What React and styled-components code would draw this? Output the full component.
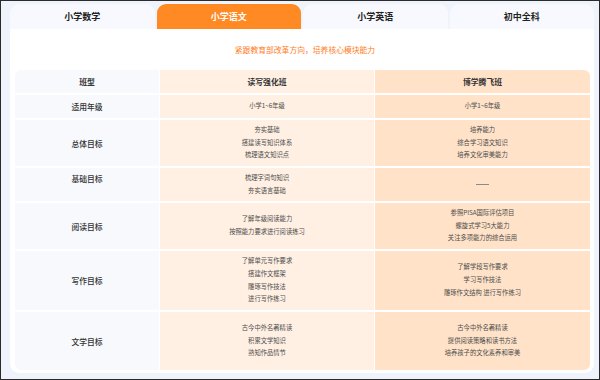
import React from 'react';
import styled, { createGlobalStyle } from 'styled-components';

const GlobalStyle = createGlobalStyle`
  html, body {
    margin: 0;
    padding: 0;
  }
  body {
    font-family: "Noto Sans CJK SC", "Noto Sans", sans-serif;
    background: #eef3fc;
  }
`;

// styles
const Page = styled.div`
  width: 600px;
  height: 380px;
  box-sizing: border-box;
  border: 1px solid #2b2b2b;
  background: #eef3fc;
  padding: 3px 5px 0 9px;
`;

const Tabs = styled.div`
  display: grid;
  grid-template-columns: repeat(4, 1fr);
  column-gap: 2px;
  height: 25px;
`;

const Tab = styled.div`
  display: flex;
  align-items: center;
  justify-content: center;
  border-radius: 9px 9px 0 0;
  font-size: 9px;
  font-weight: 700;
  color: ${p => (p.$active ? '#fff' : '#222')};
  background: ${p => (p.$active ? '#ff8a24' : '#f7f9fe')};
`;

const Card = styled.div`
  background: #fff;
  border-radius: 0 0 9px 9px;
  height: 344px;
  padding: 0 3px 0 5px;
  box-sizing: border-box;
`;

const Slogan = styled.div`
  height: 41px;
  display: flex;
  align-items: center;
  justify-content: center;
  color: #ff7c1c;
  font-size: 7.8px;
  padding-left: 4px;
`;

const Table = styled.div`
  display: grid;
  grid-template-columns: 144px 214px 215px;
  grid-template-rows: 23px 23px 46px 33px 46px 59px 58px;
  column-gap: 1px;
  row-gap: 2px;
`;

const colBg = ['#f7f9fd', '#fff0e3', '#ffe2c8'];

const Cell = styled.div`
  background: ${p => colBg[p.$col]};
  display: flex;
  flex-direction: column;
  align-items: center;
  justify-content: center;
  text-align: center;
  border-top-left-radius: ${p => (p.$tl ? '6px' : '0')};
  border-top-right-radius: ${p => (p.$tr ? '6px' : '0')};
  border-bottom-left-radius: ${p => (p.$bl ? '6px' : '0')};
  border-bottom-right-radius: ${p => (p.$br ? '6px' : '0')};
`;

const HeadText = styled.span`
  font-size: 7.8px;
  font-weight: 600;
  color: #333;
`;

const Label = styled.span`
  font-size: 7.8px;
  font-weight: 500;
  color: #333;
  padding-bottom: ${p => p.$lift || 0}px;
`;

const Line = styled.span`
  display: block;
  font-size: 6.3px;
  line-height: 12.7px;
  color: #4d4d4d;
`;

const Dash = styled.span`
  display: block;
  width: 13px;
  height: 0;
  border-top: 1px solid #8a8a8a;
`;

const tabs = ['小学数学', '小学语文', '小学英语', '初中全科'];

const rows = [
  { label: '适用年级', a: ['小学1~6年级'], b: ['小学1~6年级'] },
  {
    label: '总体目标',
    a: ['夯实基础', '搭建读写知识体系', '梳理语文知识点'],
    b: ['培养能力', '综合学习语文知识', '培养文化审美能力'],
  },
  { label: '基础目标', lift: 12, a: ['梳理字词句知识', '夯实语言基础'], b: null },
  {
    label: '阅读目标',
    a: ['了解年级阅读能力', '按照能力要求进行阅读练习'],
    b: ['参照PISA国际评估项目', '螺旋式学习5大能力', '关注多项能力的综合运用'],
  },
  {
    label: '写作目标',
    a: ['了解单元写作要求', '搭建作文框架', '雕琢写作技法', '进行写作练习'],
    b: ['了解学段写作要求', '学习写作技法', '雕琢作文结构 进行写作练习'],
  },
  {
    label: '文学目标',
    a: ['古今中外名著精读', '积累文学知识', '熟知作品情节'],
    b: ['古今中外名著精读', '提供阅读策略和读书方法', '培养孩子的文化素养和审美'],
  },
];

const Lines = ({ items }) =>
  items ? items.map(t => <Line key={t}>{t}</Line>) : <Dash />;

export default function App() {
  const last = rows.length - 1;
  return (
    <Page>
      <GlobalStyle />
      <Tabs>
        {tabs.map((t, i) => (
          <Tab key={t} $active={i === 1}>
            {t}
          </Tab>
        ))}
      </Tabs>
      <Card>
        <Slogan>紧跟教育部改革方向，培养核心模块能力</Slogan>
        <Table>
          <Cell $col={0} $tl>
            <HeadText>班型</HeadText>
          </Cell>
          <Cell $col={1}>
            <HeadText>读写强化班</HeadText>
          </Cell>
          <Cell $col={2} $tr>
            <HeadText>博学腾飞班</HeadText>
          </Cell>
          {rows.map((r, i) => (
            <React.Fragment key={r.label}>
              <Cell $col={0} $bl={i === last}>
                <Label $lift={r.lift}>{r.label}</Label>
              </Cell>
              <Cell $col={1}>
                <Lines items={r.a} />
              </Cell>
              <Cell $col={2} $br={i === last}>
                <Lines items={r.b} />
              </Cell>
            </React.Fragment>
          ))}
        </Table>
      </Card>
    </Page>
  );
}
